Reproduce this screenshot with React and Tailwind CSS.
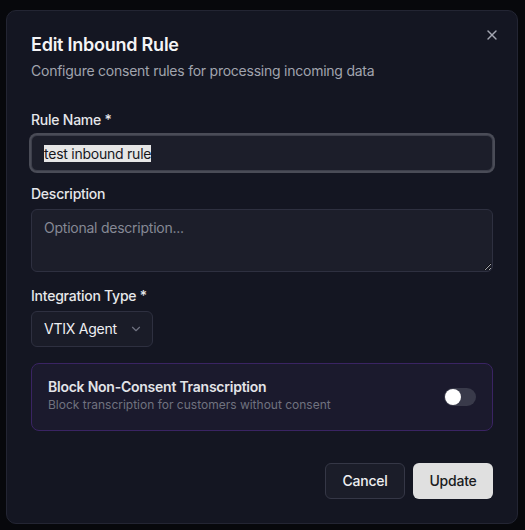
import { X, ChevronDown } from 'lucide-react';

export default function App() {
  return (
    <div className="min-h-[530px] w-[525px] bg-[#07080c] pt-[10px] pl-[6px] font-['Inter',sans-serif] tracking-[-0.015em]">
      <div className="relative w-[512px] rounded-[10px] border border-[#232533] bg-[#141622] px-6 pt-5 pb-6">
        <button className="absolute right-[17px] top-[16px] text-[#a3a6b1]">
          <X size={16} strokeWidth={2} />
        </button>

        <h2 className="text-lg leading-7 font-semibold text-[#f4f4f6]">Edit Inbound Rule</h2>
        <p className="mt-0.5 text-sm leading-5 text-[#a1a4ae]">Configure consent rules for processing incoming data</p>

        <div className="mt-[29px]">
          <label className="block text-sm leading-5 font-medium text-[#e6e7ea]">Rule Name *</label>
          <div className="mt-[5px] flex h-9 items-center rounded-md border border-[#3d3f4b] bg-[#1c1e2a] px-3 ring-2 ring-[#4a4c57]">
            <span className="bg-[#e6e6e6] text-sm leading-[17px] text-[#16171c]">test inbound rule</span>
          </div>
        </div>

        <div className="mt-[13px]">
          <label className="block text-sm leading-5 font-medium text-[#e6e7ea]">Description</label>
          <textarea
            className="mt-[5px] block h-[63px] w-full resize-y rounded-md border border-[#2e3040] bg-[#1c1e2a] px-3 py-2 text-sm leading-5 text-[#e6e7ea] placeholder:text-[#868995] outline-none"
            placeholder="Optional description..."
          />
        </div>

        <div className="mt-[14px]">
          <label className="block text-sm leading-5 font-medium text-[#e6e7ea]">Integration Type *</label>
          <div className="mt-[5px] flex h-9 w-[122px] items-center gap-3 rounded-md border border-[#2e3040] bg-[#1a1c28] pl-3 text-sm text-[#eeeff2]">
            <span>VTIX Agent</span>
            <ChevronDown size={14} className="text-[#6f7280]" />
          </div>
        </div>

        <div className="mt-4 flex items-center justify-between rounded-lg border border-[#3a2463] bg-[#1b1a2d] px-4 pt-[13px] pb-[17px]">
          <div>
            <div className="text-sm leading-5 font-semibold text-[#e3e4e8]">Block Non-Consent Transcription</div>
            <div className="text-xs leading-4 tracking-normal text-[#70727f]">Block transcription for customers without consent</div>
          </div>
          <div className="mt-1 flex h-[18px] w-8 items-center rounded-full bg-[#393a4a] px-px">
            <div className="h-4 w-4 rounded-full bg-white" />
          </div>
        </div>

        <div className="mt-8 flex justify-end gap-2">
          <button className="h-9 w-20 rounded-md border border-[#353746] bg-[#1b1d29] text-sm font-medium text-[#eeeff2]">Cancel</button>
          <button className="h-9 w-20 rounded-md bg-[#e0e0e0] text-sm font-medium text-[#1a1b20]">Update</button>
        </div>
      </div>
    </div>
  );
}
